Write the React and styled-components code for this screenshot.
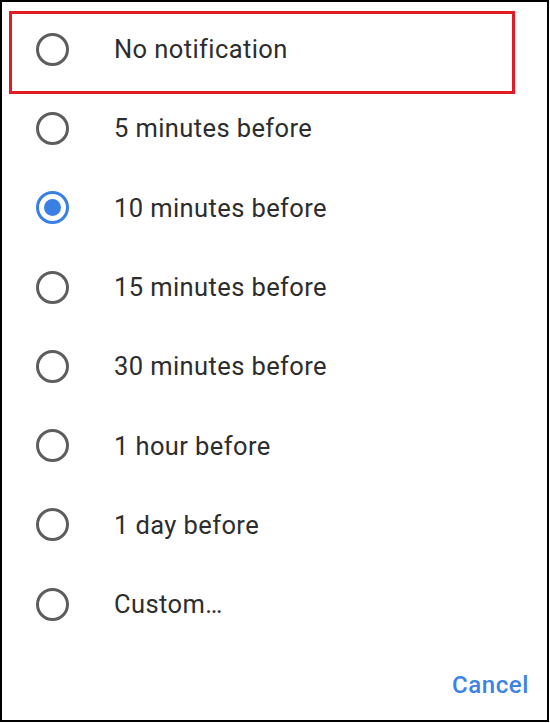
import React, { useState } from 'react'
import styled, { createGlobalStyle } from 'styled-components'

const GlobalStyle = createGlobalStyle`
  body {
    margin: 0;
    background: #ffffff;
    font-family: Roboto, "Noto Sans", "Liberation Sans", sans-serif;
  }
`

const Frame = styled.div`
  position: relative;
  box-sizing: border-box;
  width: 549px;
  height: 722px;
  border: 2px solid #000;
  background: #fff;
  display: flex;
  flex-direction: column;
`

const List = styled.div`
  display: flex;
  flex-direction: column;
  padding-top: 7.5px;
`

const Row = styled.label`
  display: flex;
  align-items: center;
  height: 79.3px;
  padding-left: 34px;
  cursor: pointer;
`

const Radio = styled.span`
  box-sizing: border-box;
  width: 33px;
  height: 33px;
  border-radius: 50%;
  border: 3px solid ${p => (p.checked ? '#3a7fe4' : '#5d5d5d')};
  display: flex;
  align-items: center;
  justify-content: center;
  flex-shrink: 0;
`

const Dot = styled.span`
  width: 17px;
  height: 17px;
  border-radius: 50%;
  background: #3a7fe4;
`

const Label = styled.span`
  margin-left: 45px;
  font-size: 25.5px;
  color: #2d2d2d;
  letter-spacing: 0.4px;
`

const Highlight = styled.div`
  position: absolute;
  left: 7px;
  top: 9px;
  width: 506px;
  height: 83px;
  box-sizing: border-box;
  border: 3px solid #e31b25;
  pointer-events: none;
`

const Footer = styled.div`
  margin-top: auto;
  display: flex;
  justify-content: flex-end;
  padding: 0 18px 21px 0;
`

const CancelButton = styled.button`
  border: none;
  background: none;
  padding: 0;
  font-family: inherit;
  font-size: 24px;
  font-weight: 500;
  color: #3d82e6;
  letter-spacing: 0.6px;
  cursor: pointer;
`

const options = [
  'No notification',
  '5 minutes before',
  '10 minutes before',
  '15 minutes before',
  '30 minutes before',
  '1 hour before',
  '1 day before',
  'Custom…',
]

export default function App() {
  const [selected, setSelected] = useState(2)

  return (
    <>
      <GlobalStyle />
      <Frame>
        <List>
          {options.map((text, i) => (
            <Row key={text} onClick={() => setSelected(i)}>
              <Radio checked={selected === i}>{selected === i && <Dot />}</Radio>
              <Label>{text}</Label>
            </Row>
          ))}
        </List>
        <Footer>
          <CancelButton>Cancel</CancelButton>
        </Footer>
        <Highlight />
      </Frame>
    </>
  )
}
